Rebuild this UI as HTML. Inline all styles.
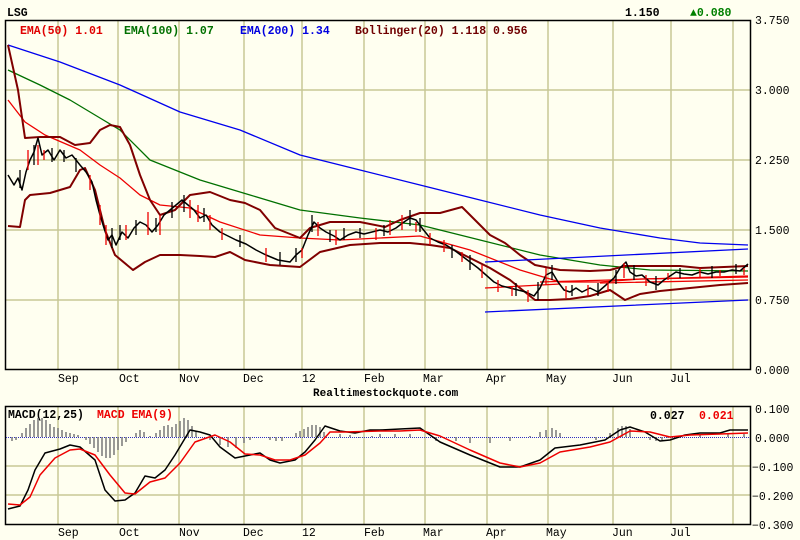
<!DOCTYPE html>
<html><head><meta charset="utf-8"><style>
html,body{margin:0;padding:0;background:#fffff0;width:800px;height:540px;overflow:hidden}
svg{display:block}
text{font-family:"Liberation Mono","DejaVu Sans Mono",monospace;font-size:11.5px}
.b{font-weight:bold}
.ax{font-family:"Liberation Mono","DejaVu Sans Mono",monospace;font-size:11.5px;fill:#000}
</style></head><body>
<svg width="800" height="540" viewBox="0 0 800 540" xmlns="http://www.w3.org/2000/svg">
<rect width="800" height="540" fill="#fffff0"/>
<text x="7" y="16" class="b" fill="#000">LSG</text>
<text x="625" y="16" class="b" fill="#000">1.150</text>
<text x="690" y="16" class="b" fill="#008000">▲0.080</text>

<g stroke="#c8c896" stroke-width="1.5" fill="none">
<path d="M58 20V370M118 20V370M179 20V370M244 20V370M302 20V370M364 20V370M425 20V370M487 20V370M548 20V370M613 20V370M671 20V370M733 20V370"/>
<path d="M5 90H750M5 160H750M5 230H750M5 300H750"/>
<path d="M58 406V525M118 406V525M179 406V525M244 406V525M302 406V525M364 406V525M425 406V525M487 406V525M548 406V525M613 406V525M671 406V525M733 406V525"/>
<path d="M5 466H750M5 495H750"/>
</g>
<rect x="5.5" y="20.5" width="745" height="349" fill="none" stroke="#000" stroke-width="1.5"/>
<rect x="5.5" y="406.5" width="745" height="118" fill="none" stroke="#000" stroke-width="1.5"/>

<text x="20" y="34" class="b" fill="#e00000">EMA(50) 1.01</text>
<text x="124" y="34" class="b" fill="#007000">EMA(100) 1.07</text>
<text x="240" y="34" class="b" fill="#0000e0">EMA(200) 1.34</text>
<text x="355" y="34" class="b" fill="#700000">Bollinger(20) 1.118 0.956</text>

<g class="ax">
<text x="755" y="24">3.750</text><text x="755" y="94">3.000</text><text x="755" y="164">2.250</text>
<text x="755" y="234">1.500</text><text x="755" y="304">0.750</text><text x="755" y="374">0.000</text>
<text x="755" y="413">0.100</text><text x="755" y="442">0.000</text><text x="752" y="471">−0.100</text>
<text x="752" y="500">−0.200</text><text x="752" y="529">−0.300</text>
</g>
<g class="ax">
<text x="58" y="382">Sep</text><text x="119" y="382">Oct</text><text x="179" y="382">Nov</text><text x="243" y="382">Dec</text><text x="302" y="382">12</text><text x="364" y="382">Feb</text><text x="423" y="382">Mar</text><text x="486" y="382">Apr</text><text x="546" y="382">May</text><text x="612" y="382">Jun</text><text x="670" y="382">Jul</text>
<text x="58" y="536">Sep</text><text x="119" y="536">Oct</text><text x="179" y="536">Nov</text><text x="243" y="536">Dec</text><text x="302" y="536">12</text><text x="364" y="536">Feb</text><text x="423" y="536">Mar</text><text x="486" y="536">Apr</text><text x="546" y="536">May</text><text x="612" y="536">Jun</text><text x="670" y="536">Jul</text>
</g>
<text x="313" y="396" class="b" fill="#000" style="font-size:11px">Realtimestockquote.com</text>

<g fill="none" stroke-linejoin="round">
<polyline stroke="#0000ee" stroke-width="1.3" points="8,45 60,62 120,85 180,112 240,130 300,155 360,170 420,185 480,200 540,215 600,228 660,238 700,243 748,245"/>
<polyline stroke="#007000" stroke-width="1.3" points="8,70 40,85 70,100 100,118 120,130 150,160 200,180 250,195 300,210 360,218 420,225 480,240 540,255 600,265 650,270 748,271"/>
<polyline stroke="#ee0000" stroke-width="1.3" points="8,100 25,122 45,135 80,150 100,165 120,178 140,195 160,205 190,208 220,222 260,235 300,238 340,240 380,238 420,236 470,250 520,270 560,282 600,282 640,279 700,278 748,277"/>
<polyline stroke="#800000" stroke-width="2" points="8,45 18,90 25,138 40,137 60,137 75,145 90,143 100,130 110,125 120,127 130,145 140,175 150,200 160,215 175,210 190,195 210,192 230,200 245,203 260,210 275,228 300,238 310,228 330,222 360,222 385,227 400,220 420,213 440,213 462,207 475,220 490,235 505,243 520,255 535,265 560,270 590,271 610,270 625,266 650,266 680,266 700,268 748,266"/>
<polyline stroke="#800000" stroke-width="2" points="8,226 20,227 25,200 30,195 50,193 70,187 80,170 85,168 95,190 105,230 115,255 133,270 145,262 160,255 180,255 200,256 215,257 230,252 245,260 270,265 300,267 320,252 350,245 380,243 410,243 430,245 450,248 470,258 490,268 510,280 525,292 535,300 550,300 570,299 590,296 610,290 625,300 640,294 660,291 680,289 700,287 720,285 748,283"/>
<path stroke="#0000ee" stroke-width="1.3" d="M485 262L748 249M485 312L748 300"/>
<path stroke="#ee0000" stroke-width="1.3" d="M485 288L560 284M540 282L748 276M600 283L748 280"/>
<polyline stroke="#000" stroke-width="1.5" points="8,175 14,185 18,178 22,190 26,172 30,160 34,152 38,138 42,155 48,150 54,160 60,150 66,158 72,155 80,165 86,172 92,182 96,200 100,215 104,228 108,240 112,235 116,245 122,232 128,238 134,228 140,222 146,225 152,232 158,225 164,215 170,210 176,205 182,200 188,205 194,210 200,218 206,215 212,225 220,232 228,236 236,240 246,244 256,250 266,255 278,260 290,262 296,255 302,250 308,235 314,222 320,228 326,232 334,236 340,240 348,235 356,232 364,234 372,232 380,230 388,232 396,228 404,222 410,218 416,220 422,228 430,238 438,242 446,245 454,250 462,256 470,262 478,268 486,275 494,282 502,286 510,288 518,290 526,292 534,296 540,288 546,275 552,272 558,282 564,290 570,292 576,288 582,292 590,288 598,292 606,285 614,278 620,268 626,262 630,272 636,276 642,275 650,282 658,285 664,280 670,276 676,272 684,274 692,275 700,272 708,274 716,272 724,272 732,270 740,271 748,264"/>
<g stroke="#000" stroke-width="1.3">
<path d="M20 170V188M34 145V165M52 148V162M64 150V162M76 158V172M112 228V248M120 225V240M136 220V235M156 218V232M172 202V218M184 195V212M204 208V222M240 235V247M280 252V265M296 248V262M312 215V232M330 230V242M344 228V240M360 228V238M384 225V236M410 210V226M420 218V232M452 245V258M470 255V270M516 283V296M538 282V300M552 265V280M572 285V296M598 283V296M616 270V284M634 265V280M656 276V290M680 268V278M712 266V278M736 264V274"/>
</g>
<g stroke="#ee0000" stroke-width="1.3">
<path d="M28 150V170M38 145V165M44 150V160M90 175V190M100 205V225M106 225V245M126 225V240M148 212V235M160 215V235M190 200V218M198 205V222M210 215V230M222 228V240M266 248V262M302 248V258M318 222V236M336 230V245M376 228V240M390 220V235M402 215V230M416 222V232M430 233V245M444 240V252M462 252V262M482 265V278M498 280V292M512 286V296M528 290V302M546 268V285M566 286V298M588 285V296M608 282V292M624 263V278M646 275V286M668 273V280M700 268V278M720 270V276M744 268V275"/>
</g>
</g>

<text x="8" y="418" class="b" fill="#000">MACD(12,25)</text>
<text x="97" y="418" class="b" fill="#ee0000">MACD EMA(9)</text>
<text x="650" y="419" class="b" fill="#000">0.027</text>
<text x="699" y="419" class="b" fill="#ee0000">0.021</text>
<line x1="6" y1="437.5" x2="750" y2="437.5" stroke="#3030c0" stroke-width="1" stroke-dasharray="1,1"/>
<g stroke="#808080" stroke-width="1.6">
<path d="M12 437V441M16 437V440M22 437V433M26 437V428M30 437V424M34 437V420M38 437V418M42 437V418M46 437V420M50 437V424M54 437V427M58 437V428M62 437V430M66 437V432M70 437V433M74 437V434M78 437V435M86 437V440M90 437V444M94 437V448M98 437V452M102 437V456M106 437V458M110 437V458M114 437V455M118 437V450M122 437V446M126 437V442M136 437V433M140 437V430M144 437V432M150 437V436M156 437V433M160 437V430M164 437V426M168 437V425M172 437V427M176 437V424M180 437V421M184 437V418M188 437V420M192 437V426M196 437V431M210 437V440M220 437V445M228 437V447M236 437V448M244 437V443M250 437V440M270 437V440M276 437V441M282 437V441M296 437V433M300 437V431M304 437V429M308 437V427M312 437V425M316 437V425M320 437V427M324 437V432M340 437V434M350 437V435M360 437V438M372 437V436M380 437V434M395 437V434M410 437V434M436 437V441M456 437V441M470 437V443M490 437V443M510 437V441M530 437V436M540 437V432M546 437V430M552 437V428M556 437V430M560 437V433M596 437V440M610 437V433M618 437V428M622 437V426M626 437V426M630 437V429M650 437V440M656 437V441M662 437V440M668 437V438M700 437V434M728 437V434M744 437V434"/>
</g>
<g fill="none" stroke-linejoin="round" stroke-width="1.5">
<polyline stroke="#000" points="8,509 20,506 28,490 35,470 45,453 60,449 70,445 80,447 95,460 105,490 115,501 125,500 135,493 145,476 155,478 165,470 175,455 190,430 200,432 210,435 220,447 235,458 250,455 260,453 270,460 280,463 295,460 305,452 315,440 325,426 340,431 355,433 370,430 380,430 400,429 420,428 440,442 470,455 500,467 520,467 540,460 555,448 580,445 605,440 620,430 630,427 645,432 660,441 670,440 685,435 700,433 720,433 730,430 748,430"/>
<polyline stroke="#ee0000" points="8,504 20,505 30,497 40,475 55,458 70,450 80,449 95,455 110,475 125,493 135,494 150,482 165,478 180,463 195,442 215,435 230,442 245,454 260,455 275,460 290,460 305,455 320,443 330,432 345,432 380,431 400,431 420,430 440,436 470,450 500,463 520,467 540,463 560,452 590,447 610,442 630,431 650,432 670,437 690,435 720,434 748,433"/>
</g>
</svg>
</body></html>
